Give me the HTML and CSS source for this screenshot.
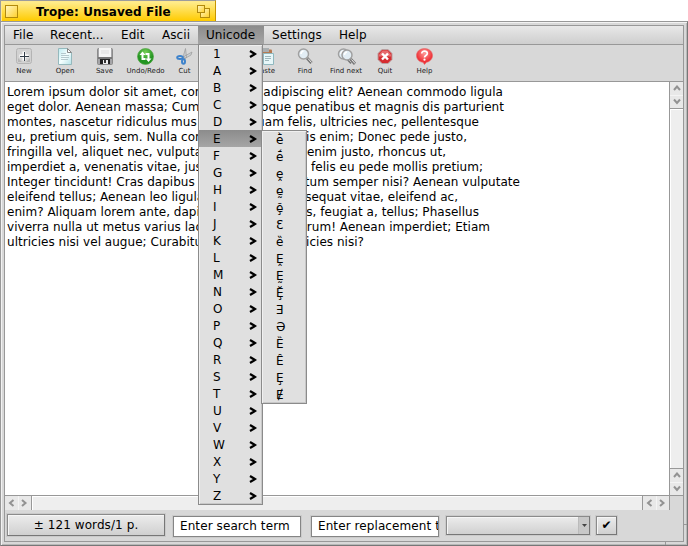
FILE: index.html
```html
<!DOCTYPE html>
<html lang="en">
<head>
<meta charset="utf-8">
<title>Trope: Unsaved File</title>
<link rel="stylesheet" href="styles.css">
</head>
<body>
<svg class="defs" width="0" height="0">
  <defs>
    <linearGradient id="gold" x2="1" y2="1"><stop stop-color="#fff8c8"/><stop offset="1" stop-color="#ffcf28"/></linearGradient>
    <radialGradient id="red" cy=".3"><stop stop-color="#ff9a98"/><stop offset="1" stop-color="#ef3439"/></radialGradient>
    <radialGradient id="green" cy=".25"><stop stop-color="#79cf59"/><stop offset="1" stop-color="#239522"/></radialGradient>
    <linearGradient id="paper" x2="1" y2="1"><stop stop-color="#bdeaf0"/><stop offset=".5" stop-color="#f5ffff"/><stop offset="1" stop-color="#b5e2e8"/></linearGradient>
    <g id="lens"><path d="M10 10l4.500 5" stroke="#777" stroke-width="3"/><path d="M11 10.500l3.500 4" stroke="#eee" stroke-width="1"/><circle cx="6.500" cy="6" r="5" fill="#e2edf4" stroke="#a0a0a0" stroke-width="1.500"/><path d="M4 6q0-2.500 2.500-3" stroke="#fff" stroke-width="1.500" fill="none"/></g>
    <path id="chev" d="M1 1l5 3-5 3" fill="none" stroke-width="2.200"/>
  </defs>
</svg>
<div class="tab">
  <svg class="close" width="13" height="13"><rect x=".5" y=".5" width="12" height="12" fill="url(#gold)" stroke="#b28a0c"/></svg>
  <span class="title">Trope: Unsaved File</span>
  <svg class="zoom" width="13" height="13"><rect x="3.500" y="3.500" width="9" height="9" fill="url(#gold)" stroke="#b28a0c"/><rect x=".5" y=".5" width="7" height="7" fill="url(#gold)" stroke="#b28a0c"/></svg>
</div>
<div class="window">
  <div class="inner">
    <nav class="menubar"><span class="m1">File</span><span class="m2">Recent...</span><span class="m3">Edit</span><span class="m4">Ascii</span><span class="m5 active">Unicode</span><span class="m6">Settings</span><span class="m7">Help</span></nav>
    <div class="toolbar">
      <div class="tool t-new"><svg width="16" height="17"><rect x=".5" y=".5" width="15" height="15" rx="2" fill="#d2d2d2" stroke="#b4b4b4"/><path d="M2 10l4 4H2zM14 10l-4 4h4z" fill="#b8b8b8"/><path d="M8 3.500v9M3.500 8h9" stroke="#fff" stroke-width="3"/><path d="M8.500 4v9M4 8.500h9" stroke="#333d48"/></svg><span>New</span></div>
      <div class="tool t-open"><svg width="16" height="17"><path d="M1.500.5h9l4 4v12h-13z" fill="url(#paper)" stroke="#95b9bd"/><path d="M10.500.5v4h4z" fill="#fff" stroke="#888"/><path d="M4 5.500h5M4 7.500h8M4 9.500h8M4 11.500h7" stroke="#b5c9ce"/></svg><span>Open</span></div>
      <div class="tool t-save"><svg width="16" height="17"><path d="M.5 1.500q0-1 1-1h13q1 0 1 1v14q0 1-1 1h-13q-1 0-1-1z" fill="#a5a5a8" stroke="#8b8b8b"/><path d="M2 0h12v9H2z" fill="#f4f4f4"/><path d="M4 3h8M4 5h8" stroke="#ddd"/><path d="M1 9h14v2H1z" fill="#777"/><path d="M3 11h10v5H3z" fill="#222"/><path d="M6 12h5v4H6z" fill="#eee"/><path d="M7 12h2v3H7z" fill="#333"/></svg><span>Save</span></div>
      <div class="tool t-undo"><svg width="17" height="17"><circle cx="8.500" cy="8.500" r="8" fill="url(#green)" stroke="#51a543" stroke-width=".7"/><path d="M5.500 5v6h3M11.500 12V6h-3" fill="none" stroke="#fff" stroke-width="2"/><path d="M2.500 7l3-3.500 3 3.500zM8.500 10.500l3 3.500 3-3.500z" fill="#fff"/></svg><span>Undo/Redo</span></div>
      <div class="tool t-cut"><svg width="17" height="17"><path d="M9.500.5l1 9-2 1-1-3zM16 4l-9 5 1 2 7-4z" fill="#ccd0d3" stroke="#999" stroke-width=".7"/><g fill="none" stroke="#3e83cc" stroke-width="2"><ellipse cx="4" cy="9.500" rx="2.800" ry="1.500"/><ellipse cx="7.500" cy="13.500" rx="1.500" ry="2.200"/></g></svg><span>Cut</span></div>
      <div class="tool t-paste"><svg width="16" height="17"><rect x="1" y="1.500" width="13" height="14" rx="1" fill="#b57a52"/><rect x="4" y="0" width="7" height="4" fill="#a9aeb0"/><path d="M5.500 5.500h10v11h-10z" fill="#e7f7f9" stroke="#8fb8bf"/><path d="M7 8.500h6M7 10.500h6M7 12.500h4" stroke="#9eb7bc"/></svg><span>Paste</span></div>
      <div class="tool t-find"><svg width="16" height="17"><use href="#lens"/></svg><span>Find</span></div>
      <div class="tool t-next"><svg width="19" height="17"><use href="#lens"/><use href="#lens" x="3.500" y="1"/></svg><span>Find next</span></div>
      <div class="tool t-quit"><svg width="16" height="17"><path d="M5 1.500h6l4 4v6l-4 4H5l-4-4v-6z" fill="#d52c30" stroke="#b9a0a0"/><path d="M5.500 2.500h5l3.500 4v2H2v-2z" fill="#e66c6e"/><path d="M5 5.500l6 6M11 5.500l-6 6" stroke="#fff" stroke-width="2.400"/></svg><span>Quit</span></div>
      <div class="tool t-help"><svg width="17" height="17"><path d="M8.500.5c4.500 0 8 3 8 7s-3.500 6.500-6 6.800L8.500 16.500l-1.500-2.200C3 14 .5 11 .5 7.500c0-4 3.500-7 8-7z" fill="url(#red)" stroke="#e36467" stroke-width=".6"/><path d="M5.800 5.500c0-3.500 5.700-3 5.500 0 0 2-2.800 2-2.800 4" fill="none" stroke="#fff" stroke-width="1.700"/><circle cx="8.500" cy="11.700" r="1.100" fill="#fff"/></svg><span>Help</span></div>
    </div>
    <div class="edit">
      <div class="text" id="text"></div>
      <div class="vscroll">
        <div class="pair"><i><svg width="8" height="7"><path d="M1 5l3-3.500L7 5"/></svg></i><i><svg width="8" height="7"><path d="M1 1.500L4 5l3-3.500"/></svg></i></div>
        <div class="track"></div>
        <div class="pair"><i><svg width="8" height="7"><path d="M1 5l3-3.500L7 5"/></svg></i><i><svg width="8" height="7"><path d="M1 1.500L4 5l3-3.500"/></svg></i></div>
      </div>
    </div>
    <div class="hscroll">
      <div class="pair"><i><svg width="7" height="8"><path d="M5.500 1L2 4l3.500 3"/></svg></i><i><svg width="7" height="8"><path d="M1 1l3.500 3L1 7"/></svg></i></div>
      <div class="track"></div>
      <div class="pair"><i><svg width="7" height="8"><path d="M5.500 1L2 4l3.500 3"/></svg></i><i><svg width="7" height="8"><path d="M1 1l3.500 3L1 7"/></svg></i></div>
      <div class="corner"></div>
    </div>
    <div class="status">
      <div class="button words">± 121 words/1 p.</div>
      <div class="field search">Enter search term</div>
      <div class="field replace">Enter replacement text</div>
      <div class="button combo"><span><svg width="5" height="3"><path d="M0 0h5L2.500 3z" fill="#444"/></svg></span></div>
      <div class="button check">✔</div>
    </div>
  </div>
  <b class="notch-right"></b><b class="notch-bottom"></b>
</div>
<div class="menu letters" id="letters"></div>
<div class="menu glyphs" id="glyphs"></div>
<script src="menu.js"></script>
</body>
</html>
```
FILE: styles.css
```css
* { box-sizing: border-box; }
body { margin: 0; width: 688px; height: 546px; overflow: hidden; background: #fff; color: #000; font: 12px/15px "DejaVu Sans", sans-serif; display: flex; flex-direction: column; }
.defs { position: absolute; }
svg { display: block; flex: none; }
.tab { width: 216px; height: 21px; flex: none; display: flex; align-items: center; padding: 3px 5px 0 4px; border: 1px solid #9c9c9c; border-right-color: #c79500; border-bottom: 0; background: linear-gradient(#ffee94, #ffcb00); box-shadow: inset 1px 1px #ffe98b; }
.tab .title { flex: 1; font-weight: bold; padding-left: 18px; margin-top: -1px; white-space: nowrap; letter-spacing: .06px; }
.tab svg { margin-top: -2px; }
.window { position: relative; height: 525px; flex: none; background: #d8d8d8; border: 1px solid #989898; border-right-color: #777; border-bottom-color: #777; padding: 3px; box-shadow: inset 1px 1px #f2f2f2, inset -1px -1px #b8b8b8; }
.inner { height: 517px; border: 1px solid #989898; display: flex; flex-direction: column; }
.menubar { height: 19px; flex: none; display: flex; line-height: 18px; letter-spacing: .08px; background: linear-gradient(#e8e8e8, #cecece); border-bottom: 1px solid #989898; }
.menubar span { padding-left: 8px; white-space: nowrap; }
.m1 { width: 37px; } .m2 { width: 71px; } .m3 { width: 41px; } .m4 { width: 44px; } .m5 { width: 66px; } .m6 { width: 67px; }
.menubar .active { background: linear-gradient(#8c8c8c, #a5a5a5); }
.toolbar { height: 37px; flex: none; display: flex; background: #d8d8d8; border-bottom: 1px solid #989898; padding-top: 3px; }
.tool { display: flex; flex-direction: column; align-items: center; font-size: 7px; line-height: 9px; white-space: nowrap; flex: none; color: #222; }
.tool span { margin-top: 2px; }
.t-new { width: 38px; } .t-open { width: 44px; } .t-save { width: 35px; } .t-undo { width: 47px; } .t-cut { width: 31px; }
.t-paste { width: 31px; margin-left: 50px; } .t-find { width: 30px; margin-left: 9px; } .t-next { width: 42px; margin-left: 5px; } .t-quit { width: 30px; margin-left: 3px; } .t-help { width: 31px; margin-left: 9px; }
.edit { height: 414px; flex: none; display: flex; background: #fff; border-bottom: 1px solid #989898; }
.text { flex: 1; padding: 3px 2px; overflow: hidden; }
.line { display: flex; justify-content: space-between; white-space: nowrap; letter-spacing: .03px; }
.vscroll { width: 14px; flex: none; border-left: 1px solid #989898; display: flex; flex-direction: column; }
.pair { display: flex; background: #e8e8e8; }
.pair i { display: flex; align-items: center; justify-content: center; flex: 1; }
.pair path { fill: none; stroke: #929292; stroke-width: 2; }
.vscroll .pair { height: 26px; flex-direction: column; }
.vscroll .pair i + i { border-top: 1px solid #f4f4f4; }
.track { flex: 1; background: #eee; box-shadow: inset 1px 1px #fff; }
.vscroll .track { border: solid #989898; border-width: 1px 0; }
.hscroll { height: 14px; flex: none; display: flex; }
.hscroll .pair { width: 26px; }
.hscroll .pair i + i { border-left: 1px solid #f4f4f4; }
.hscroll .track { border: solid #989898; border-width: 0 1px; }
.corner { width: 14px; background: #d8d8d8; border-left: 1px solid #989898; }
.status { flex: 1; display: flex; align-items: flex-start; background: #d8d8d8; padding: 4px 0 0 2px; letter-spacing: .09px; }
.button { border: 1px solid #8b8b8b; border-right-color: #777; border-bottom-color: #777; background: linear-gradient(#ececec, #d0d0d0); box-shadow: inset 1px 1px #f6f6f6, 0 0 0 1px #cacaca; display: flex; align-items: center; justify-content: center; flex: none; white-space: nowrap; }
.words { width: 158px; height: 22px; }
.field { height: 21px; border: 1px solid #858585; background: #fff; box-shadow: 0 0 0 1px #cbcbcb; line-height: 19px; padding-left: 6px; overflow: hidden; white-space: nowrap; flex: none; margin-top: 2px; }
.search { width: 128px; margin-left: 8px; } .replace { width: 128px; margin-left: 10px; }
.combo { width: 144px; height: 19px; margin: 2px 0 0 7px; justify-content: flex-end; }
.combo span { width: 11px; height: 17px; display: flex; align-items: center; justify-content: center; background: #c8c8c8; border-left: 1px solid #bbb; }
.check { width: 21px; height: 19px; margin: 2px 0 0 6px; }
.notch-right { position: absolute; right: 0; top: 502px; width: 3px; height: 1px; background: #989898; }
.notch-bottom { position: absolute; right: 21px; bottom: 0; width: 1px; height: 3px; background: #989898; }
.menu { position: absolute; background: #e0e0e0; border: 1px solid #8b8b8b; box-shadow: inset 1px 1px #f0f0f0, inset -1px -1px #c8c8c8; }
.letters { left: 198px; top: 44px; width: 65px; height: 461px; }
.glyphs { left: 261px; top: 130px; width: 46px; height: 274px; }
.item { height: 17px; line-height: 17px; padding: 1px 5px 0 14px; display: flex; align-items: center; justify-content: space-between; }
.item svg { stroke: #000; margin-top: -1px; }
.item.selected { background: linear-gradient(#8c8c8c, #a5a5a5); }
```
FILE: menu.js
```js
// Each line: start, rest, and the full line width in pixels.
const lines = [
  ['Lorem ipsum dolor sit amet, consec', 'adipiscing elit? Aenean commodo ligula', 496],
  ['eget dolor. Aenean massa; Cum soc', 'natoque penatibus et magnis dis parturient', 497],
  ['montes, nascetur ridiculus mus', 'quam felis, ultricies nec, pellentesque', 472],
  ['eu, pretium quis, sem. Nulla conseq', 'quis enim; Donec pede justo,', 460],
  ['fringilla vel, aliquet nec, vulputate', 'enim justo, rhoncus ut,', 439],
  ['imperdiet a, venenatis vitae, justo', 'dictum felis eu pede mollis pretium;', 476],
  ['Integer tincidunt! Cras dapibus', 'elementum semper nisi? Aenean vulputate', 513],
  ['eleifend tellus; Aenean leo ligula', 'consequat vitae, eleifend ac,', 451],
  ['enim? Aliquam lorem ante, dapibus', 'quis, feugiat a, tellus; Phasellus', 472],
  ['viverra nulla ut metus varius laor', 'rutrum! Aenean imperdiet; Etiam', 483],
  ['ultricies nisi vel augue; Curabitur', 'ultricies nisi?', 357],
];
document.getElementById('text').innerHTML = lines
  .map(([a, b, w]) => `<div class="line" style="width:${w}px"><span>${a}</span><span>${b}</span></div>`).join('');
const arrow = '<svg width="8" height="8"><use href="#chev"/></svg>';
document.getElementById('letters').innerHTML = [...'1ABCDEFGHIJKLMNOPQRSTUVWXYZ']
  .map(c => `<div class="item${c === 'E' ? ' selected' : ''}"><span>${c}</span>${arrow}</div>`).join('');
document.getElementById('glyphs').innerHTML = [...'ḕḗḙḛḝƐȅḘḚḜƎƏȄȆȨɆ']
  .map(c => `<div class="item"><span>${c}</span></div>`).join('');
```
